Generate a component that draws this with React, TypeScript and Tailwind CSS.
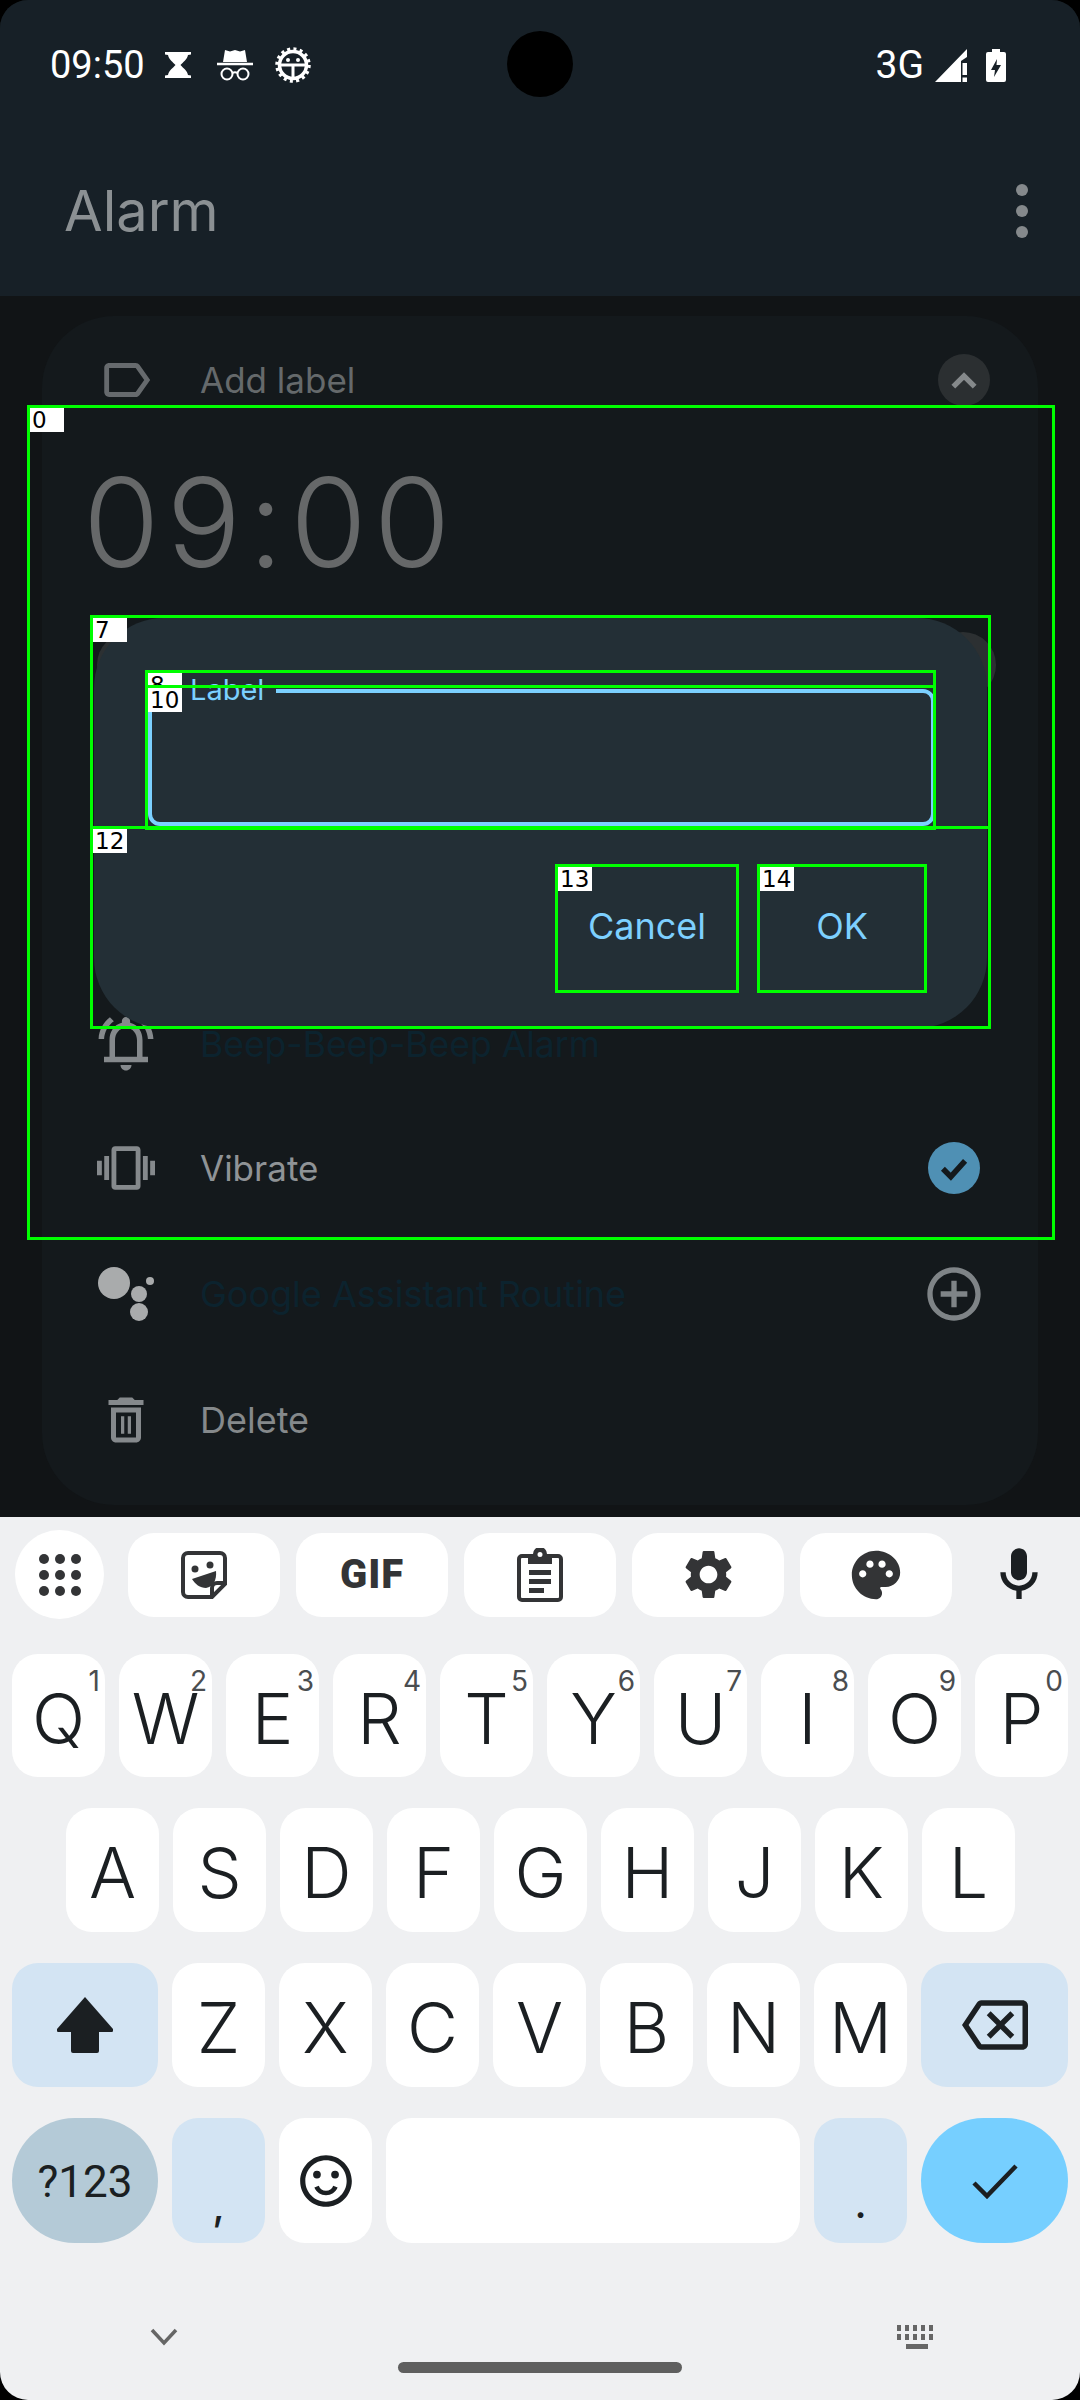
const ui = { fontFamily: 'Inter, "Liberation Sans", sans-serif' };

const Mat = ({ d, className }: { d: string; className: string }) => (
  <svg viewBox="0 0 24 24" fill="currentColor" fillRule="evenodd" className={className}>
    <path d={d} />
  </svg>
);

const LABEL =
  'M17.63 5.84C17.27 5.33 16.67 5 16 5L5 5.01C3.9 5.01 3 5.9 3 7v10c0 1.1.9 1.99 2 1.99L16 19c.67 0 1.27-.33 1.63-.84L22 12l-4.37-6.16zM16 17H5V7h11l3.55 5L16 17z';
const BELL =
  'M7.58 4.08L6.15 2.65C3.75 4.48 2.17 7.3 2.03 10.5h2c.15-2.65 1.51-4.97 3.55-6.42zm12.39 6.42h2c-.15-3.2-1.73-6.02-4.12-7.85l-1.42 1.43c2.02 1.45 3.39 3.77 3.54 6.42zM18 11c0-3.07-1.63-5.64-4.5-6.32V4c0-.83-.67-1.5-1.5-1.5s-1.5.67-1.5 1.5v.68C7.64 5.36 6 7.92 6 11v6H4v2h16v-2h-2v-6zm-2 6H8v-6c0-2.48 1.51-4.5 4-4.5s4 2.02 4 4.5v6zm-4 5c1.1 0 2-.9 2-2h-4c0 1.1.9 2 2 2z';
const VIBRATE =
  'M0 15h2V9H0v6zm3 2h2V7H3v10zm19-8v6h2V9h-2zm-3 8h2V7h-2v10zM16.5 3h-9C6.67 3 6 3.67 6 4.5v15c0 .83.67 1.5 1.5 1.5h9c.83 0 1.5-.67 1.5-1.5v-15c0-.83-.67-1.5-1.5-1.5zM16 19H8V5h8v14z';
const TRASH =
  'M14.5 3h-5l-1 1H5v2h14V4h-3.5l-1-1zM6 7v12c0 1.1.9 2 2 2h8c1.1 0 2-.9 2-2V7H6zm10 12H8V9h8v10zM10 10.5h1.3v7H10v-7zm2.7 0H14v7h-1.3v-7z';
const ADD =
  'M13 7h-2v4H7v2h4v4h2v-4h4v-2h-4V7zm-1-5C6.48 2 2 6.48 2 12s4.48 10 10 10 10-4.48 10-10S17.52 2 12 2zm0 18c-4.41 0-8-3.59-8-8s3.59-8 8-8 8 3.59 8 8-3.59 8-8 8z';
const GEAR =
  'M19.14 12.94c.04-.3.06-.61.06-.94 0-.32-.02-.64-.07-.94l2.03-1.58c.18-.14.23-.41.12-.61l-1.92-3.32c-.12-.22-.37-.29-.59-.22l-2.39.96c-.5-.38-1.03-.7-1.62-.94l-.36-2.54c-.04-.24-.24-.41-.48-.41h-3.84c-.24 0-.43.17-.47.41l-.36 2.54c-.59.24-1.13.57-1.62.94l-2.39-.96c-.22-.08-.47 0-.59.22L2.74 8.87c-.12.21-.08.47.12.61l2.03 1.58c-.05.3-.09.63-.09.94s.02.64.07.94l-2.03 1.58c-.18.14-.23.41-.12.61l1.92 3.32c.12.22.37.29.59.22l2.39-.96c.5.38 1.03.7 1.62.94l.36 2.54c.05.24.24.41.48.41h3.84c.24 0 .44-.17.47-.41l.36-2.54c.59-.24 1.13-.56 1.62-.94l2.39.96c.22.08.47 0 .59-.22l1.92-3.32c.12-.22.07-.47-.12-.61l-2.01-1.58zM12 15.6c-1.98 0-3.6-1.62-3.6-3.6s1.62-3.6 3.6-3.6 3.6 1.62 3.6 3.6-1.62 3.6-3.6 3.6z';
const PALETTE =
  'M12 2C6.49 2 2 6.49 2 12s4.49 10 10 10c1.38 0 2.5-1.12 2.5-2.5 0-.61-.23-1.2-.64-1.67-.08-.1-.13-.21-.13-.33 0-.28.22-.5.5-.5H16c3.31 0 6-2.69 6-6 0-4.96-4.49-9-10-9zm5.5 11c-.83 0-1.5-.67-1.5-1.5s.67-1.5 1.5-1.5 1.5.67 1.5 1.5-.67 1.5-1.5 1.5zm-3-4c-.83 0-1.5-.67-1.5-1.5S13.67 6 14.5 6s1.5.67 1.5 1.5S15.33 9 14.5 9zM5 11.5c0-.83.67-1.5 1.5-1.5s1.5.67 1.5 1.5S7.33 13 6.5 13 5 12.33 5 11.5zm6-4c0 .83-.67 1.5-1.5 1.5S8 8.33 8 7.5 8.67 6 9.5 6s1.5.67 1.5 1.5z';
const MIC =
  'M12 14c1.66 0 3-1.34 3-3V5c0-1.66-1.34-3-3-3S9 3.34 9 5v6c0 1.66 1.34 3 3 3zM17 11c0 2.76-2.24 5-5 5s-5-2.24-5-5H5c0 3.53 2.61 6.43 6 6.92V21h2v-3.08c3.39-.49 6-3.39 6-6.92h-2z';
const BACKSPACE =
  'M22 3H7c-.69 0-1.23.35-1.59.88L0 12l5.41 8.11c.36.53.9.89 1.59.89h15c1.1 0 2-.9 2-2V5c0-1.1-.9-2-2-2zm0 16H7.07L2.4 12l4.66-7H22v14zm-11.59-2L14 13.41 17.59 17 19 15.59 15.41 12 19 8.41 17.59 7 14 10.59 10.41 7 9 8.41 12.59 12 9 15.59z';
const SMILE =
  'M12 2C6.48 2 2 6.48 2 12s4.48 10 10 10 10-4.48 10-10S17.52 2 12 2zm0 18c-4.42 0-8-3.58-8-8s3.58-8 8-8 8 3.58 8 8-3.58 8-8 8zm-3.5-9a1.5 1.5 0 1 0 0-3 1.5 1.5 0 0 0 0 3zm7 0a1.5 1.5 0 1 0 0-3 1.5 1.5 0 0 0 0 3zM7.5 14.500c.8 1.900 2.500 3 4.500 3s3.700-1.100 4.500-3l-1.700-.7c-.5 1.300-1.500 2-2.800 2s-2.300-.7-2.800-2z';

const StatusLeft = () => (
  <div className="flex items-center">
    <span className="text-[38px] leading-none text-white w-[115px]" style={{ fontFamily: 'Roboto, sans-serif' }}>
      09:50
    </span>
    <svg viewBox="0 0 26 26" className="w-[26px] h-[26px] text-white" fill="currentColor">
      <path d="M0 0h26v2.500l-3 .5c-1 5-5 7-7.500 10 2.500 3 6.500 5 7.500 10l3 .5V26H0v-2.500l3-.5c1-5 5-7 7.500-10C8 10 4 8 3 3l-3-.5z" />
    </svg>
    <svg viewBox="0 0 36 34" className="w-[36px] h-[34px] ml-[26px] text-white" fill="none" stroke="currentColor">
      <path d="M8 2l5 1.500L18 2l5 1.500L28 2l2 12H6z" fill="currentColor" stroke="none" />
      <path d="M0 16h36" strokeWidth="2.500" />
      <circle cx="10" cy="26" r="5.500" strokeWidth="2" />
      <circle cx="26" cy="26" r="5.500" strokeWidth="2" />
      <path d="M15.500 25c1.500-1 3.500-1 5 0" strokeWidth="2" />
    </svg>
    <svg viewBox="0 0 36 36" className="w-[36px] h-[36px] ml-[22px] text-white" fill="none" stroke="currentColor">
      <circle cx="18" cy="18" r="13.500" strokeWidth="3.500" />
      <circle cx="18" cy="18" r="16" strokeWidth="3.500" strokeDasharray="3 3.280" />
      <path d="M5 18h26M18 18v13" strokeWidth="3" />
      <circle cx="13" cy="13" r="2" fill="currentColor" stroke="none" />
      <circle cx="23" cy="13" r="2" fill="currentColor" stroke="none" />
    </svg>
  </div>
);

const StatusRight = () => (
  <div className="flex items-center">
    <span className="text-[39px] leading-none text-white" style={{ fontFamily: 'Roboto, sans-serif' }}>
      3G
    </span>
    <svg viewBox="0 0 32 33" className="w-[32px] h-[33px] ml-[11px] text-white" fill="currentColor">
      <path d="M32 0v8l-6 4v21H0z" />
      <path d="M27.500 14H32v12h-4.500zM27.500 28.500H32V33h-4.500z" />
    </svg>
    <svg viewBox="0 0 20 33" className="w-[20px] h-[33px] ml-[19px] text-white" fill="currentColor" fillRule="evenodd">
      <path d="M6 0h8v3h4a2 2 0 0 1 2 2v26a2 2 0 0 1-2 2H2a2 2 0 0 1-2-2V5a2 2 0 0 1 2-2h4zM11 10l-6 11h4l-1 7 7-12h-4.500z" />
    </svg>
  </div>
);

const Row = ({
  icon,
  text,
  textClass,
  right,
  className = '',
}: {
  icon: React.ReactNode;
  text: string;
  textClass: string;
  right?: React.ReactNode;
  className?: string;
}) => (
  <div className={`flex items-center h-[64px] pl-[55px] pr-[58px] ${className}`}>
    <div className="w-[58px] flex justify-center text-[#85898c]">{icon}</div>
    <span className={`ml-[45px] leading-none ${textClass}`}>{text}</span>
    {right && <div className="ml-auto">{right}</div>}
  </div>
);

const Card = () => (
  <div className="mx-[42px] h-[1189px] rounded-[72px] bg-[#14191c] pt-[32px]" style={ui}>
    <Row
      icon={<Mat d={LABEL} className="w-[60px] h-[60px] text-[#666a6d]" />}
      text="Add label"
      textClass="text-[35px] text-[#65696b]"
      right={
        <div className="-mr-[10px] w-[52px] h-[52px] rounded-full bg-[#2b2f31] flex items-center justify-center">
          <svg viewBox="0 0 24 24" className="w-[32px] h-[32px] text-[#85898b]" fill="none" stroke="currentColor" strokeWidth="4">
            <path d="M4 17l8-8 8 8" />
          </svg>
        </div>
      }
    />
    <div className="h-[120px] mt-[50px] pl-[41px] flex items-center text-[124px] leading-none font-light tracking-[7px] text-[#666869]">
      09:00
    </div>
    <div className="mt-[50px] pl-[55px] pr-[42px] flex justify-between">
      {['S', 'M', 'T', 'W', 'T', 'F', 'S'].map((d, i) => (
        <div key={i} className="w-[66px] h-[66px] rounded-full bg-[#2c3032]" aria-label={d} />
      ))}
    </div>
    <Row
      className="mt-[313px]"
      icon={<Mat d={BELL} className="w-[66px] h-[66px] shrink-0" />}
      text="Beep-Beep-Beep Alarm"
      textClass="text-[35.500px] mt-[3px] text-[#0c232e]"
    />
    <Row
      className="mt-[61px]"
      icon={<Mat d={VIBRATE} className="w-[58px] h-[58px]" />}
      text="Vibrate"
      textClass="text-[35px] text-[#8f9396]"
      right={
        <div className="w-[52px] h-[52px] rounded-full bg-[#4f90b4] flex items-center justify-center">
          <svg viewBox="0 0 24 24" className="w-[38px] h-[38px] text-[#14191c]" fill="none" stroke="currentColor" strokeWidth="3.500">
            <path d="M5 12.500l5 5 9-10" />
          </svg>
        </div>
      }
    />
    <Row
      className="mt-[62px]"
      icon={
        <svg viewBox="0 0 58 54" className="w-[58px] h-[54px] text-[#a9abac]" fill="currentColor">
          <circle cx="17" cy="16" r="16" />
          <circle cx="42" cy="27" r="8" />
          <circle cx="42" cy="45" r="9" />
          <circle cx="53" cy="14" r="4" />
        </svg>
      }
      text="Google Assistant Routine"
      textClass="text-[36px] text-[#0c232e]"
      right={<Mat d={ADD} className="w-[64px] h-[64px] -mr-[6px] text-[#7f8487]" />}
    />
    <Row
      className="mt-[62px]"
      icon={<Mat d={TRASH} className="w-[60px] h-[60px] shrink-0" />}
      text="Delete"
      textClass="text-[36px] text-[#85898b]"
    />
  </div>
);

const Dialog = () => (
  <div className="absolute left-[94px] top-[618px] w-[893px] h-[410px] rounded-[70px] bg-[#232f36]" style={ui}>
    <div className="relative mt-[71px] ml-[54px] mr-[52px] h-[137px] rounded-[12px] border-[4px] border-[#7bd0ff]">
      <span className="absolute -top-[19px] left-[22px] bg-[#232f36] pl-[16px] pr-[12px] text-[29px] leading-[32px] text-[#7bd0ff]">Label</span>
    </div>
    <div className="mt-[39px] ml-[462px] flex gap-[20px] text-[36px] text-[#7dd0ff]">
      <button className="w-[182px] h-[127px] pb-[5px]">Cancel</button>
      <button className="w-[168px] h-[127px] pb-[5px]">OK</button>
    </div>
  </div>
);

// annotation boxes drawn on the capture
const boxes = [
  { n: '0', x: 27, y: 405, w: 1028, h: 835 },
  { n: '7', x: 90, y: 615, w: 901, h: 414 },
  { n: '8', x: 145, y: 670, w: 791, h: 160 },
  { n: '10', x: 145, y: 685, w: 791, h: 145 },
  { n: '12', x: 90, y: 826, w: 901, h: 203 },
  { n: '13', x: 555, y: 864, w: 184, h: 129 },
  { n: '14', x: 757, y: 864, w: 170, h: 129 },
];

const Overlay = () => (
  <>
    {boxes.map(b => (
      <div
        key={b.n}
        className="absolute border-[3px] border-[#00ff00]"
        style={{ left: b.x, top: b.y, width: b.w, height: b.h }}
      >
        <span
          className="block w-[34px] h-[24px] bg-white text-black text-[23px] leading-[24px] pl-[2px] overflow-hidden"
          style={{ fontFamily: '"DejaVu Sans", sans-serif' }}
        >
          {b.n}
        </span>
      </div>
    ))}
  </>
);

const ToolBtn = ({ children }: { children: React.ReactNode }) => (
  <div className="w-[152px] h-[84px] rounded-[26px] bg-white flex items-center justify-center text-[#333436]">{children}</div>
);

const Toolbar = () => (
  <div className="flex items-center pl-[15px]">
    <div className="w-[89px] h-[89px] rounded-full bg-white flex items-center justify-center mr-[24px]">
      <svg viewBox="0 0 42 42" className="w-[42px] h-[42px] text-[#333436]" fill="currentColor">
        {[5, 21, 37].map(y =>
          [5, 21, 37].map(x => <circle key={`${x}-${y}`} cx={x} cy={y} r="5" />),
        )}
      </svg>
    </div>
    <div className="flex gap-[16px]">
      <ToolBtn>
        <svg viewBox="0 0 48 50" className="w-[48px] h-[50px]" fill="none" stroke="currentColor" strokeWidth="4">
          <path d="M8 3h32a5 5 0 0 1 5 5v26L32 47H8a5 5 0 0 1-5-5V8a5 5 0 0 1 5-5z" />
          <path d="M45 33H37a5 5 0 0 0-5 5v9" />
          <circle cx="15" cy="19" r="3.500" fill="currentColor" stroke="none" />
          <circle cx="30" cy="15" r="3.500" fill="currentColor" stroke="none" />
          <path d="M12 29l24-8c1 9-3 16-10 17-6 0-11-4-14-9z" fill="currentColor" stroke="none" />
        </svg>
      </ToolBtn>
      <ToolBtn>
        <span className="text-[40px] font-black tracking-[1px] leading-none" style={{ fontFamily: 'Roboto, sans-serif' }}>
          GIF
        </span>
      </ToolBtn>
      <ToolBtn>
        <svg viewBox="0 0 46 54" className="w-[46px] h-[54px]" fill="currentColor" fillRule="evenodd">
          <path d="M16 6a7 7 0 0 1 14 0h11a5 5 0 0 1 5 5v38a5 5 0 0 1-5 5H5a5 5 0 0 1-5-5V11a5 5 0 0 1 5-5zm7-2a2.500 2.500 0 1 0 0 5 2.500 2.500 0 0 0 0-5zM11 10H5a1 1 0 0 0-1 1v38a1 1 0 0 0 1 1h36a1 1 0 0 0 1-1V11a1 1 0 0 0-1-1h-6v6H11zM12 22h22v5H12zM12 31h22v5H12zM12 40h15v5H12z" />
        </svg>
      </ToolBtn>
      <ToolBtn>
        <Mat d={GEAR} className="w-[59px] h-[59px]" />
      </ToolBtn>
      <ToolBtn>
        <Mat d={PALETTE} className="w-[58px] h-[58px]" />
      </ToolBtn>
    </div>
    <Mat d={MIC} className="ml-[35px] w-[64px] h-[64px] text-[#1b1f22]" />
  </div>
);

const Key = ({
  label,
  num,
  className = 'w-[93px] bg-white',
}: {
  label?: React.ReactNode;
  num?: string;
  className?: string;
}) => (
  <div className={`relative shrink-0 h-full rounded-[26px] flex items-center justify-center pt-[6px] text-[70px] leading-none font-[350] text-[#1b1f22] ${className}`}>
    {label}
    {num && (
      <span className="absolute top-[11px] right-[5px] text-[28px] leading-[32px] font-normal text-[#4a4d50]">{num}</span>
    )}
  </div>
);

const Keyboard = () => (
  <div className="bg-[#eff0f2] pt-[13px] h-[883px]" style={ui}>
    <Toolbar />
    <div className="mt-[35px] h-[123px] flex gap-[14px] pl-[12px]">
      {'QWERTYUIOP'.split('').map((k, i) => (
        <Key key={k} label={k} num={String((i + 1) % 10)} />
      ))}
    </div>
    <div className="mt-[31px] h-[124px] flex gap-[14px] pl-[66px]">
      {'ASDFGHJKL'.split('').map(k => (
        <Key key={k} label={k} />
      ))}
    </div>
    <div className="mt-[31px] h-[124px] flex gap-[14px] pl-[12px]">
      <Key
        className="w-[146px] bg-[#d3e4f3]"
        label={
          <svg viewBox="0 0 56 56" className="w-[56px] h-[56px] -mt-[6px]" fill="currentColor">
            <path d="M28 0l28 32a2 2 0 0 1-2 3H42v19a2 2 0 0 1-2 2H16a2 2 0 0 1-2-2V35H2a2 2 0 0 1-2-3z" />
          </svg>
        }
      />
      {'ZXCVBNM'.split('').map(k => (
        <Key key={k} label={k} />
      ))}
      <Key className="w-[147px] bg-[#d3e4f3]" label={<Mat d={BACKSPACE} className="w-[66px] h-[66px] -mt-[6px]" />} />
    </div>
    <div className="mt-[31px] h-[125px] flex gap-[14px] pl-[12px]">
      <Key
        className="w-[146px] !rounded-full bg-[#b4cad7]"
        label={
          <span className="text-[44px] font-normal -mt-[4px]" style={{ fontFamily: 'Roboto, sans-serif' }}>
            ?123
          </span>
        }
      />
      <Key className="w-[93px] bg-[#d3e4f3]" label={<span className="text-[40px] font-medium mt-[44px]">,</span>} />
      <Key className="w-[93px] bg-white" label={<Mat d={SMILE} className="w-[62px] h-[62px] -mt-[6px]" />} />
      <Key className="w-[414px] bg-white" />
      <Key className="w-[93px] bg-[#d3e4f3]" label={<span className="text-[40px] font-medium mt-[40px]">.</span>} />
      <Key
        className="w-[147px] !rounded-full bg-[#76cfff]"
        label={
          <svg viewBox="0 0 46 36" className="w-[46px] h-[36px] -mt-[6px]" fill="none" stroke="currentColor" strokeWidth="4.500">
            <path d="M2 20l13 13L44 3" />
          </svg>
        }
      />
    </div>
    <div className="mt-[75px] h-[38px] flex items-center justify-between pl-[150px] pr-[142px] text-[#666666]">
      <svg viewBox="0 0 28 18" className="w-[28px] h-[18px]" fill="none" stroke="currentColor" strokeWidth="3.500">
        <path d="M2 2l12 13L26 2" />
      </svg>
      <svg viewBox="0 0 42 24" className="w-[42px] h-[24px]" fill="currentColor">
        {[0, 8, 16, 24, 32].map(x => (
          <g key={x}>
            <rect x={x + 1} y="0" width="4" height="6" />
            <rect x={x + 1} y="9" width="4" height="6" />
          </g>
        ))}
        <rect x="10" y="19" width="22" height="5" />
      </svg>
    </div>
    <div className="mt-[6px] mx-auto w-[284px] h-[11px] rounded-full bg-[#5f5f5f]" />
  </div>
);

export default function App() {
  return (
    <div className="w-[1080px] h-[2400px] bg-black">
      <div className="relative w-full h-full rounded-[28px] overflow-hidden bg-[#111416]">
        <div className="h-[296px] bg-[#172027]">
          <div className="h-[130px] pl-[50px] pr-[74px] flex items-center justify-between">
            <StatusLeft />
            <StatusRight />
          </div>
          <div className="h-[166px] pl-[64px] pr-[52px] pb-[4px] flex items-center justify-between">
            <span className="text-[56px] leading-none text-[#8b9093]" style={ui}>
              Alarm
            </span>
            <svg viewBox="0 0 12 54" className="w-[12px] h-[54px] text-[#85898c]" fill="currentColor">
              <circle cx="6" cy="6" r="6" />
              <circle cx="6" cy="27" r="6" />
              <circle cx="6" cy="48" r="6" />
            </svg>
          </div>
        </div>
        <div className="h-[1221px] pt-[20px]">
          <Card />
        </div>
        <Keyboard />
        <div className="absolute left-[507px] top-[31px] w-[66px] h-[66px] rounded-full bg-black" />
        <Dialog />
        <Overlay />
      </div>
    </div>
  );
}
